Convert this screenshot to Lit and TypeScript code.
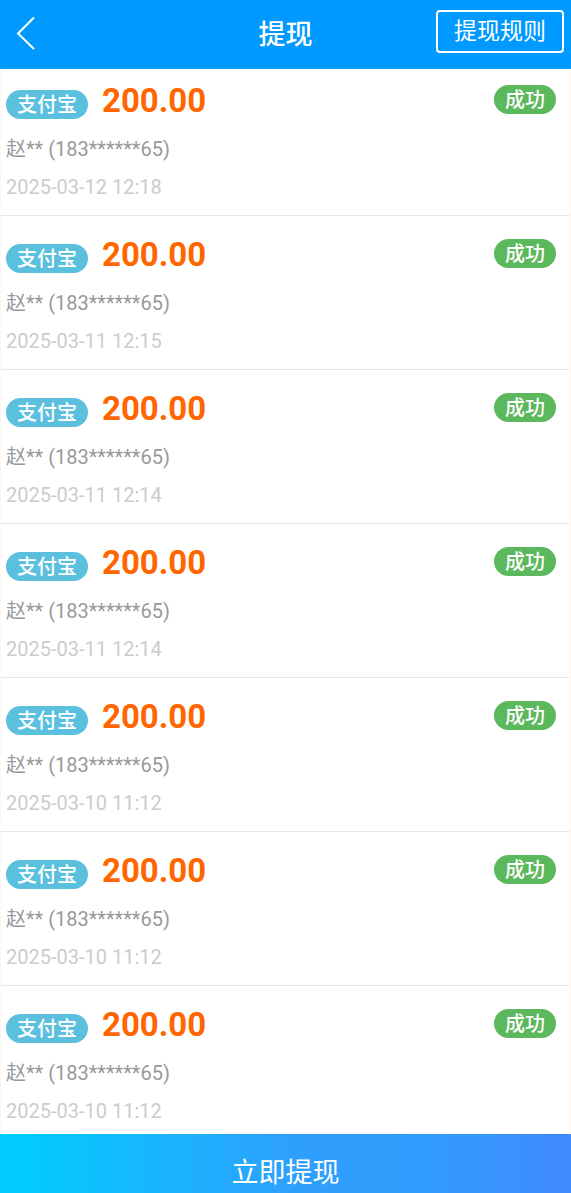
import { LitElement, html, css } from "lit";
import { customElement, state } from "lit/decorators.js";

interface Withdrawal {
  amount: string;
  account: string;
  time: string;
}

const times = [
  "2025-03-12 12:18",
  "2025-03-11 12:15",
  "2025-03-11 12:14",
  "2025-03-11 12:14",
  "2025-03-10 11:12",
  "2025-03-10 11:12",
  "2025-03-10 11:12",
];

@customElement("app-root")
export class AppRoot extends LitElement {
  static styles = css`
    :host {
      display: flex;
      flex-direction: column;
      height: 100vh;
      overflow: hidden;
      background: #fff;
      font-family: Roboto, "Noto Sans CJK SC", sans-serif;
    }
    * {
      box-sizing: border-box;
    }
    .bar {
      flex: none;
      display: grid;
      grid-template-columns: 1fr auto 1fr;
      align-items: start;
      height: 69px;
      padding: 10px 7px 0;
      background: #0099ff;
      color: #fff;
    }
    button {
      border: 0;
      padding: 0;
      background: none;
      color: inherit;
      font: inherit;
      cursor: pointer;
    }
    .back {
      justify-self: start;
      display: flex;
      padding: 6px 5px;
    }
    h1 {
      margin: 0;
      font-size: 27px;
      line-height: 50px;
      font-weight: 500;
    }
    .rules {
      justify-self: end;
      height: 43px;
      padding: 0 16px;
      border: 2px solid #fff;
      border-radius: 4px;
      font-size: 23px;
      line-height: 39px;
    }
    .list {
      flex: 1;
      min-height: 0;
      overflow: hidden;
      margin: 0;
      padding: 0;
      border: solid #fff6f0;
      border-width: 0 1px;
      list-style: none;
    }
    .item {
      height: 154px;
      padding: 8px 14px 0 5px;
      border-bottom: 1px solid #e8e8e8;
    }
    .item:first-child {
      height: 147px;
      padding-top: 1px;
    }
    .head {
      display: flex;
      align-items: flex-start;
      height: 60px;
    }
    .tag {
      height: 29px;
      padding: 0 11px;
      border-radius: 15px;
      font-size: 20px;
      line-height: 30px;
      font-weight: 500;
      color: #fff;
    }
    .channel {
      margin-top: 20px;
      background: #5bc0de;
    }
    .done {
      margin: 15px 0 0 auto;
      background: #5cb85c;
    }
    .amount {
      margin: 11px 0 0 14px;
      font-size: 33px;
      line-height: 40px;
      font-weight: 700;
      color: #ff6600;
    }
    .line {
      margin: 0;
      font-size: 20px;
      line-height: 38px;
      color: #999;
    }
    .time {
      color: #ccc;
    }
    .submit {
      flex: none;
      height: 59px;
      padding-top: 19px;
      background: linear-gradient(90deg, #00ccff 4%, #2f9ffc 52%, #309cfd 74%, #418bff);
      color: #fff;
      font-size: 27px;
      line-height: 40px;
    }
  `;

  @state() private records: Withdrawal[] = times.map((time) => ({
    amount: "200.00",
    account: "赵** (183******65)",
    time,
  }));

  render() {
    return html`
      <header class="bar">
        <button class="back" aria-label="返回">
          <svg width="26" height="34" viewBox="0 0 26 34" fill="none" stroke="#fff" stroke-width="2">
            <path d="M22 1.5 6 17.5l16 15.5" />
          </svg>
        </button>
        <h1>提现</h1>
        <button class="rules">提现规则</button>
      </header>
      <ul class="list">
        ${this.records.map(
          (r) => html`
            <li class="item">
              <div class="head">
                <span class="tag channel">支付宝</span>
                <span class="amount">${r.amount}</span>
                <span class="tag done">成功</span>
              </div>
              <p class="line">${r.account}</p>
              <p class="line time">${r.time}</p>
            </li>
          `
        )}
      </ul>
      <button class="submit">立即提现</button>
    `;
  }
}
